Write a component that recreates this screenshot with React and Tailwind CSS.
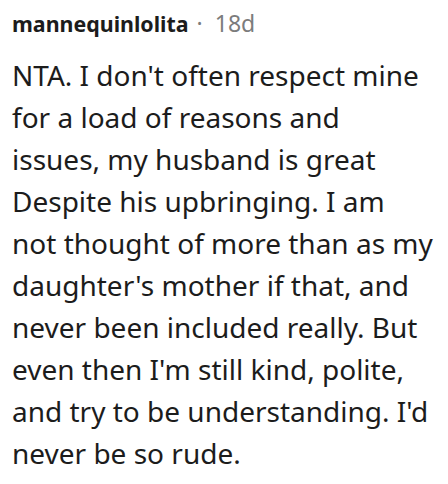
const lines = [
  "NTA. I don't often respect mine",
  "for a load of reasons and",
  "issues, my husband is great",
  "Despite his upbringing. I am",
  "not thought of more than as my",
  "daughter's mother if that, and",
  "never been included really. But",
  "even then I'm still kind, polite,",
  "and try to be understanding. I'd",
  "never be so rude.",
];

export default function App() {
  return (
    <div className="w-[448px] h-[484px] bg-white overflow-hidden pl-[12px] pr-[4px] pt-[8px]" style={{ fontFamily: '"Noto Sans", sans-serif' }}>
      <div className="flex items-baseline h-[30px] text-[21.4px] leading-[30px]">
        <span className="font-bold text-[#1c1c1c]">mannequinlolita</span>
        <span className="text-[#7c7c7c] text-[23px] ml-[8px]">·</span>
        <span className="text-[#7c7c7c] text-[23px] ml-[12px]">18d</span>
      </div>
      <p className="mt-[15.7px] text-[28px] leading-[42px] text-[#1c1c1c]">
        {lines.map((l, i) => (
          <span key={i} className="block whitespace-nowrap">{l}</span>
        ))}
      </p>
    </div>
  );
}
